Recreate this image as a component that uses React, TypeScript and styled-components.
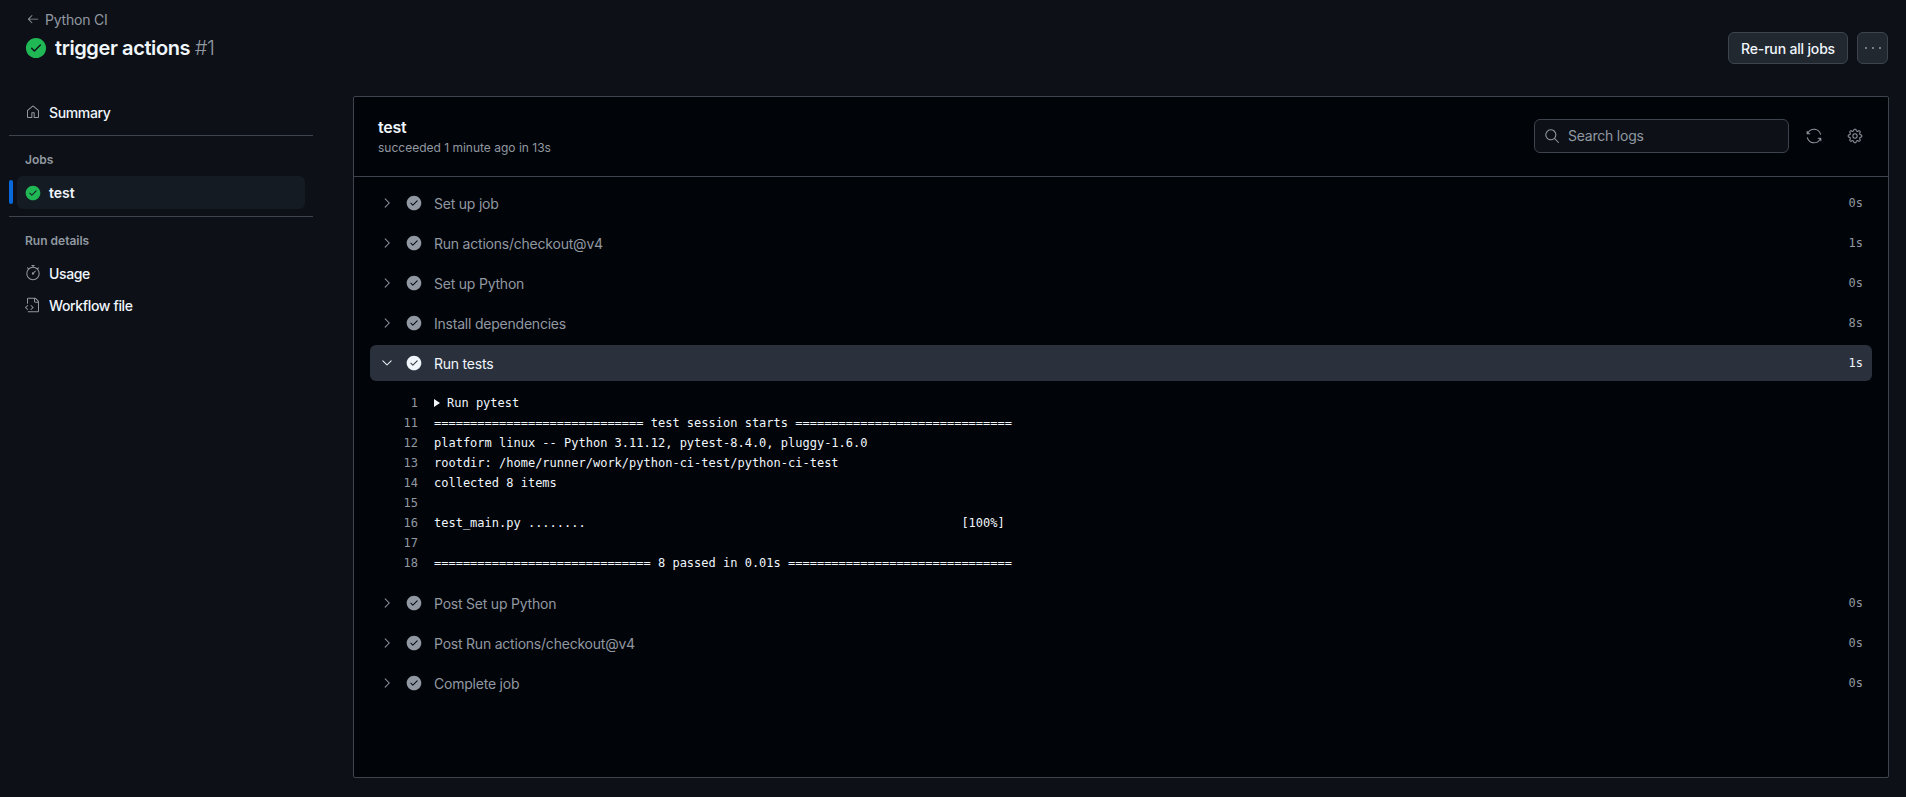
import styled, { createGlobalStyle } from 'styled-components'
import {
    GoArrowLeft,
    GoCheckCircleFill,
    GoChevronDown,
    GoChevronRight,
    GoFileCode,
    GoGear,
    GoHome,
    GoSearch,
    GoStopwatch,
    GoSync,
} from 'react-icons/go'

const GlobalStyle = createGlobalStyle`
    html, body {
        margin: 0;
        height: 100%;
        background: #0d1117;
        overflow: hidden;
    }
    body {
        font-family: Inter, 'Liberation Sans', sans-serif;
        letter-spacing: -0.22px;
        color: #f0f6fc;
    }
    * {
        box-sizing: border-box;
    }
`

const Page = styled.div`
    width: 1906px;
    height: 797px;
    display: flex;
    flex-direction: column;
`

const TopBar = styled.header`
    height: 96px;
    display: flex;
    justify-content: space-between;
    padding: 11px 18px 0 25px;
`

const BackLink = styled.a`
    display: flex;
    align-items: center;
    gap: 5px;
    height: 16px;
    padding-left: 1px;
    font-size: 14px;
    color: #9198a1;
`

const TitleRow = styled.h1`
    display: flex;
    align-items: center;
    gap: 8px;
    margin: 7px 0 0;
    height: 28px;
    font-size: 20px;
    font-weight: 600;
    letter-spacing: -0.4px;
    color: #f0f6fc;
    white-space: pre;
`

const RunNumber = styled.span`
    font-weight: 300;
    color: #9198a1;
`

const Actions = styled.div`
    display: flex;
    gap: 9px;
    margin-top: 21px;
    height: 32px;
`

const Button = styled.button`
    display: flex;
    align-items: center;
    justify-content: center;
    height: 32px;
    padding: 0 12px;
    border: 1px solid #3d444d;
    border-radius: 6px;
    background: #212830;
    color: #f0f6fc;
    font-family: inherit;
    font-size: 14px;
    font-weight: 500;
    letter-spacing: -0.17px;
`

const DotsButton = styled(Button)`
    width: 31px;
    padding: 0;
    color: #9198a1;
`

const Dots = styled.svg`
    width: 16px;
    height: 4px;
    fill: currentColor;
`

const Body = styled.div`
    flex: 1;
    display: flex;
    min-height: 0;
    padding-bottom: 19px;
`

const Sidebar = styled.nav`
    width: 353px;
    flex: none;
    padding: 0 40px 0 9px;
`

const NavItem = styled.a`
    display: flex;
    align-items: center;
    gap: 8px;
    height: 32px;
    padding-left: 16px;
    font-size: 14px;
    font-weight: 500;
    letter-spacing: -0.36px;
    color: #f0f6fc;

    svg {
        color: #9198a1;
    }
`

const Divider = styled.hr`
    height: 1px;
    margin: 7px 0 0;
    border: none;
    background: #3d444d;
`

const NavLabel = styled.div`
    height: 17px;
    margin-top: 15px;
    margin-bottom: 8px;
    padding-left: 16px;
    font-size: 12px;
    font-weight: 600;
    line-height: 17px;
    letter-spacing: 0;
    color: #9198a1;
`

const JobItem = styled.a`
    position: relative;
    display: flex;
    align-items: center;
    gap: 8px;
    height: 33px;
    margin: 0 8px;
    padding-left: 8px;
    border-radius: 6px;
    background: #151b23;
    font-size: 14px;
    font-weight: 600;
    letter-spacing: 0;
    color: #f0f6fc;

    &::before {
        content: '';
        position: absolute;
        left: -8px;
        top: 4px;
        width: 4px;
        height: 24px;
        border-radius: 2px;
        background: #0969da;
    }
`

const Panel = styled.main`
    width: 1536px;
    flex: none;
    border: 1px solid #3d444d;
    border-radius: 2px;
    background: #010409;
`

const PanelHeader = styled.div`
    display: flex;
    align-items: center;
    justify-content: space-between;
    height: 80px;
    padding: 0 17px 0 24px;
    border-bottom: 1px solid #3d444d;
`

const JobName = styled.div`
    font-size: 16px;
    font-weight: 600;
    line-height: 20px;
    color: #f0f6fc;
`

const JobMeta = styled.div`
    margin-top: 2px;
    font-size: 12px;
    line-height: 18px;
    letter-spacing: 0;
    color: #9198a1;
`

const Tools = styled.div`
    display: flex;
    align-items: center;
    gap: 9px;
    margin-bottom: 2px;
`

const SearchBox = styled.label`
    display: flex;
    align-items: center;
    gap: 8px;
    width: 255px;
    height: 34px;
    padding-left: 9px;
    border: 1px solid #3d444d;
    border-radius: 6px;
    background: #0d1117;
    font-size: 14px;
    color: #9198a1;
`

const ToolButton = styled.span`
    display: flex;
    align-items: center;
    justify-content: center;
    width: 32px;
    height: 32px;
    color: #9198a1;
`

const Steps = styled.div`
    display: flex;
    flex-direction: column;
    padding: 6px 16px 0;
`

const StepRow = styled.div<{ $open?: boolean }>`
    display: flex;
    align-items: center;
    height: 36px;
    margin: 2px 0;
    padding: 0 9px;
    border-radius: 6px;
    background: ${(p) => (p.$open ? '#2a313c' : 'transparent')};
    color: ${(p) => (p.$open ? '#f0f6fc' : '#9198a1')};
    font-size: 14px;
`

const StepChevron = styled.span`
    display: flex;
    width: 16px;
    margin-right: 11px;
`

const StepCheck = styled.span`
    display: flex;
    width: 16px;
    margin-right: 12px;
`

const StepName = styled.span`
    flex: 1;
`

const StepTime = styled.span`
    font-family: 'DejaVu Sans Mono', 'Liberation Mono', monospace;
    font-size: 12px;
    letter-spacing: 0;
`

const Log = styled.div`
    padding: 10px 0;
`

const LogLine = styled.div`
    display: flex;
    gap: 16px;
    height: 20px;
    font-family: 'DejaVu Sans Mono', 'Liberation Mono', monospace;
    font-size: 12px;
    line-height: 20px;
    letter-spacing: 0;
    white-space: pre;
`

const LineNumber = styled.span`
    width: 48px;
    text-align: right;
    color: #9198a1;
`

const LineText = styled.span`
    display: flex;
    align-items: center;
    color: #f0f6fc;
`

const Caret = styled.svg`
    width: 6px;
    height: 8px;
    margin-right: 7px;
    fill: #f0f6fc;
`

const beforeSteps = ['Set up job', 'Run actions/checkout@v4', 'Set up Python', 'Install dependencies']
const beforeTimes = ['0s', '1s', '0s', '8s']
const afterSteps = ['Post Set up Python', 'Post Run actions/checkout@v4', 'Complete job']

const logLines = [
    { n: 11, text: '============================= test session starts ==============================' },
    { n: 12, text: 'platform linux -- Python 3.11.12, pytest-8.4.0, pluggy-1.6.0' },
    { n: 13, text: 'rootdir: /home/runner/work/python-ci-test/python-ci-test' },
    { n: 14, text: 'collected 8 items' },
    { n: 15, text: '' },
    { n: 16, text: 'test_main.py ........                                                    [100%]' },
    { n: 17, text: '' },
    { n: 18, text: '============================== 8 passed in 0.01s ===============================' },
]

interface StepProps {
    name: string
    time: string
    open?: boolean
}
const Step = ({ name, time, open }: StepProps) => (
    <StepRow $open={open}>
        <StepChevron>{open ? <GoChevronDown size={16} /> : <GoChevronRight size={16} />}</StepChevron>
        <StepCheck>
            <GoCheckCircleFill size={16} color={open ? '#f0f6fc' : '#9198a1'} />
        </StepCheck>
        <StepName>{name}</StepName>
        <StepTime>{time}</StepTime>
    </StepRow>
)

export default function App() {
    return (
        <Page>
            <GlobalStyle />
            <TopBar>
                <div>
                    <BackLink>
                        <GoArrowLeft size={14} />
                        Python CI
                    </BackLink>
                    <TitleRow>
                        <GoCheckCircleFill size={22} color="#1fb855" />
                        <span>
                            trigger actions <RunNumber>#1</RunNumber>
                        </span>
                    </TitleRow>
                </div>
                <Actions>
                    <Button>Re-run all jobs</Button>
                    <DotsButton>
                        <Dots viewBox="0 0 16 4">
                            <circle cx="1" cy="2" r="1" />
                            <circle cx="8" cy="2" r="1" />
                            <circle cx="15" cy="2" r="1" />
                        </Dots>
                    </DotsButton>
                </Actions>
            </TopBar>
            <Body>
                <Sidebar>
                    <NavItem>
                        <GoHome size={16} />
                        Summary
                    </NavItem>
                    <Divider />
                    <NavLabel>Jobs</NavLabel>
                    <JobItem>
                        <GoCheckCircleFill size={16} color="#1fb855" />
                        test
                    </JobItem>
                    <Divider />
                    <NavLabel>Run details</NavLabel>
                    <NavItem>
                        <GoStopwatch size={16} />
                        Usage
                    </NavItem>
                    <NavItem>
                        <GoFileCode size={16} />
                        Workflow file
                    </NavItem>
                </Sidebar>
                <Panel>
                    <PanelHeader>
                        <div>
                            <JobName>test</JobName>
                            <JobMeta>succeeded 1 minute ago in 13s</JobMeta>
                        </div>
                        <Tools>
                            <SearchBox>
                                <GoSearch size={16} />
                                Search logs
                            </SearchBox>
                            <ToolButton>
                                <GoSync size={16} />
                            </ToolButton>
                            <ToolButton>
                                <GoGear size={16} />
                            </ToolButton>
                        </Tools>
                    </PanelHeader>
                    <Steps>
                        {beforeSteps.map((name, i) => (
                            <Step key={name} name={name} time={beforeTimes[i]} />
                        ))}
                        <Step name="Run tests" time="1s" open />
                        <Log>
                            <LogLine>
                                <LineNumber>1</LineNumber>
                                <LineText>
                                    <Caret viewBox="0 0 6 8">
                                        <polygon points="0,0 6,4 0,8" />
                                    </Caret>
                                    Run pytest
                                </LineText>
                            </LogLine>
                            {logLines.map((line) => (
                                <LogLine key={line.n}>
                                    <LineNumber>{line.n}</LineNumber>
                                    <LineText>{line.text}</LineText>
                                </LogLine>
                            ))}
                        </Log>
                        {afterSteps.map((name) => (
                            <Step key={name} name={name} time="0s" />
                        ))}
                    </Steps>
                </Panel>
            </Body>
        </Page>
    )
}
